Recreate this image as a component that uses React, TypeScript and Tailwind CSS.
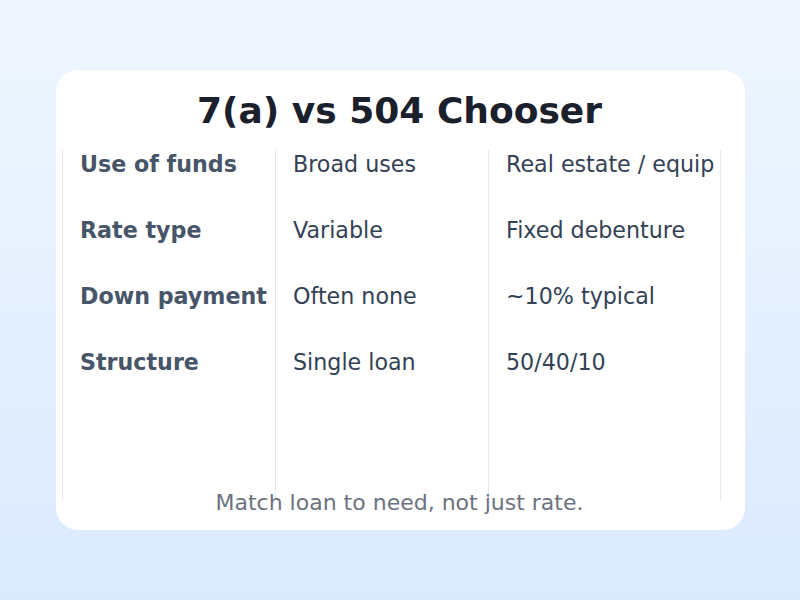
const rows = [
  { label: 'Use of funds', a: 'Broad uses', b: 'Real estate / equip' },
  { label: 'Rate type', a: 'Variable', b: 'Fixed debenture' },
  { label: 'Down payment', a: 'Often none', b: '~10% typical' },
  { label: 'Structure', a: 'Single loan', b: '50/40/10' },
];

export default function App() {
  return (
    <div
      className="w-[800px] h-[600px] bg-gradient-to-b from-[#eff6ff] to-[#dbeafe] pt-[70px] pl-[56px]"
      style={{ fontFamily: '"DejaVu Sans", sans-serif' }}
    >
      <div className="w-[689px] h-[460px] bg-white rounded-[22px] pt-[20px] flex flex-col">
        {/* Title */}
        <h1 className="w-[687px] text-center text-[36px] leading-[42px] font-bold text-[#1a202c]">
          7(a) vs 504 Chooser
        </h1>

        {/* Comparison grid */}
        <div className="mt-[18px] ml-[6px] h-[350px] flex border-r border-[#e5e7eb] w-[659px]">
          <div className="w-[213px] border-l border-[#e5e7eb] pl-[17px] flex flex-col gap-[38px]">
            {rows.map((r) => (
              <div key={r.label} className="text-[22.2px] leading-[28px] font-bold text-[#475569] whitespace-nowrap">
                {r.label}
              </div>
            ))}
          </div>
          <div className="w-[213px] border-l border-[#e5e7eb] pl-[17px] flex flex-col gap-[38px]">
            {rows.map((r) => (
              <div key={r.label} className="text-[22.2px] leading-[28px] text-[#334155] whitespace-nowrap">
                {r.a}
              </div>
            ))}
          </div>
          <div className="flex-1 border-l border-[#e5e7eb] pl-[17px] flex flex-col gap-[38px]">
            {rows.map((r) => (
              <div key={r.label} className="text-[22.2px] leading-[28px] text-[#334155] whitespace-nowrap">
                {r.b}
              </div>
            ))}
          </div>
        </div>

        {/* Footer note */}
        <p className="-mt-[11px] w-[687px] text-center text-[22px] leading-[28px] text-[#6b7280]">
          Match loan to need, not just rate.
        </p>
      </div>
    </div>
  );
}
